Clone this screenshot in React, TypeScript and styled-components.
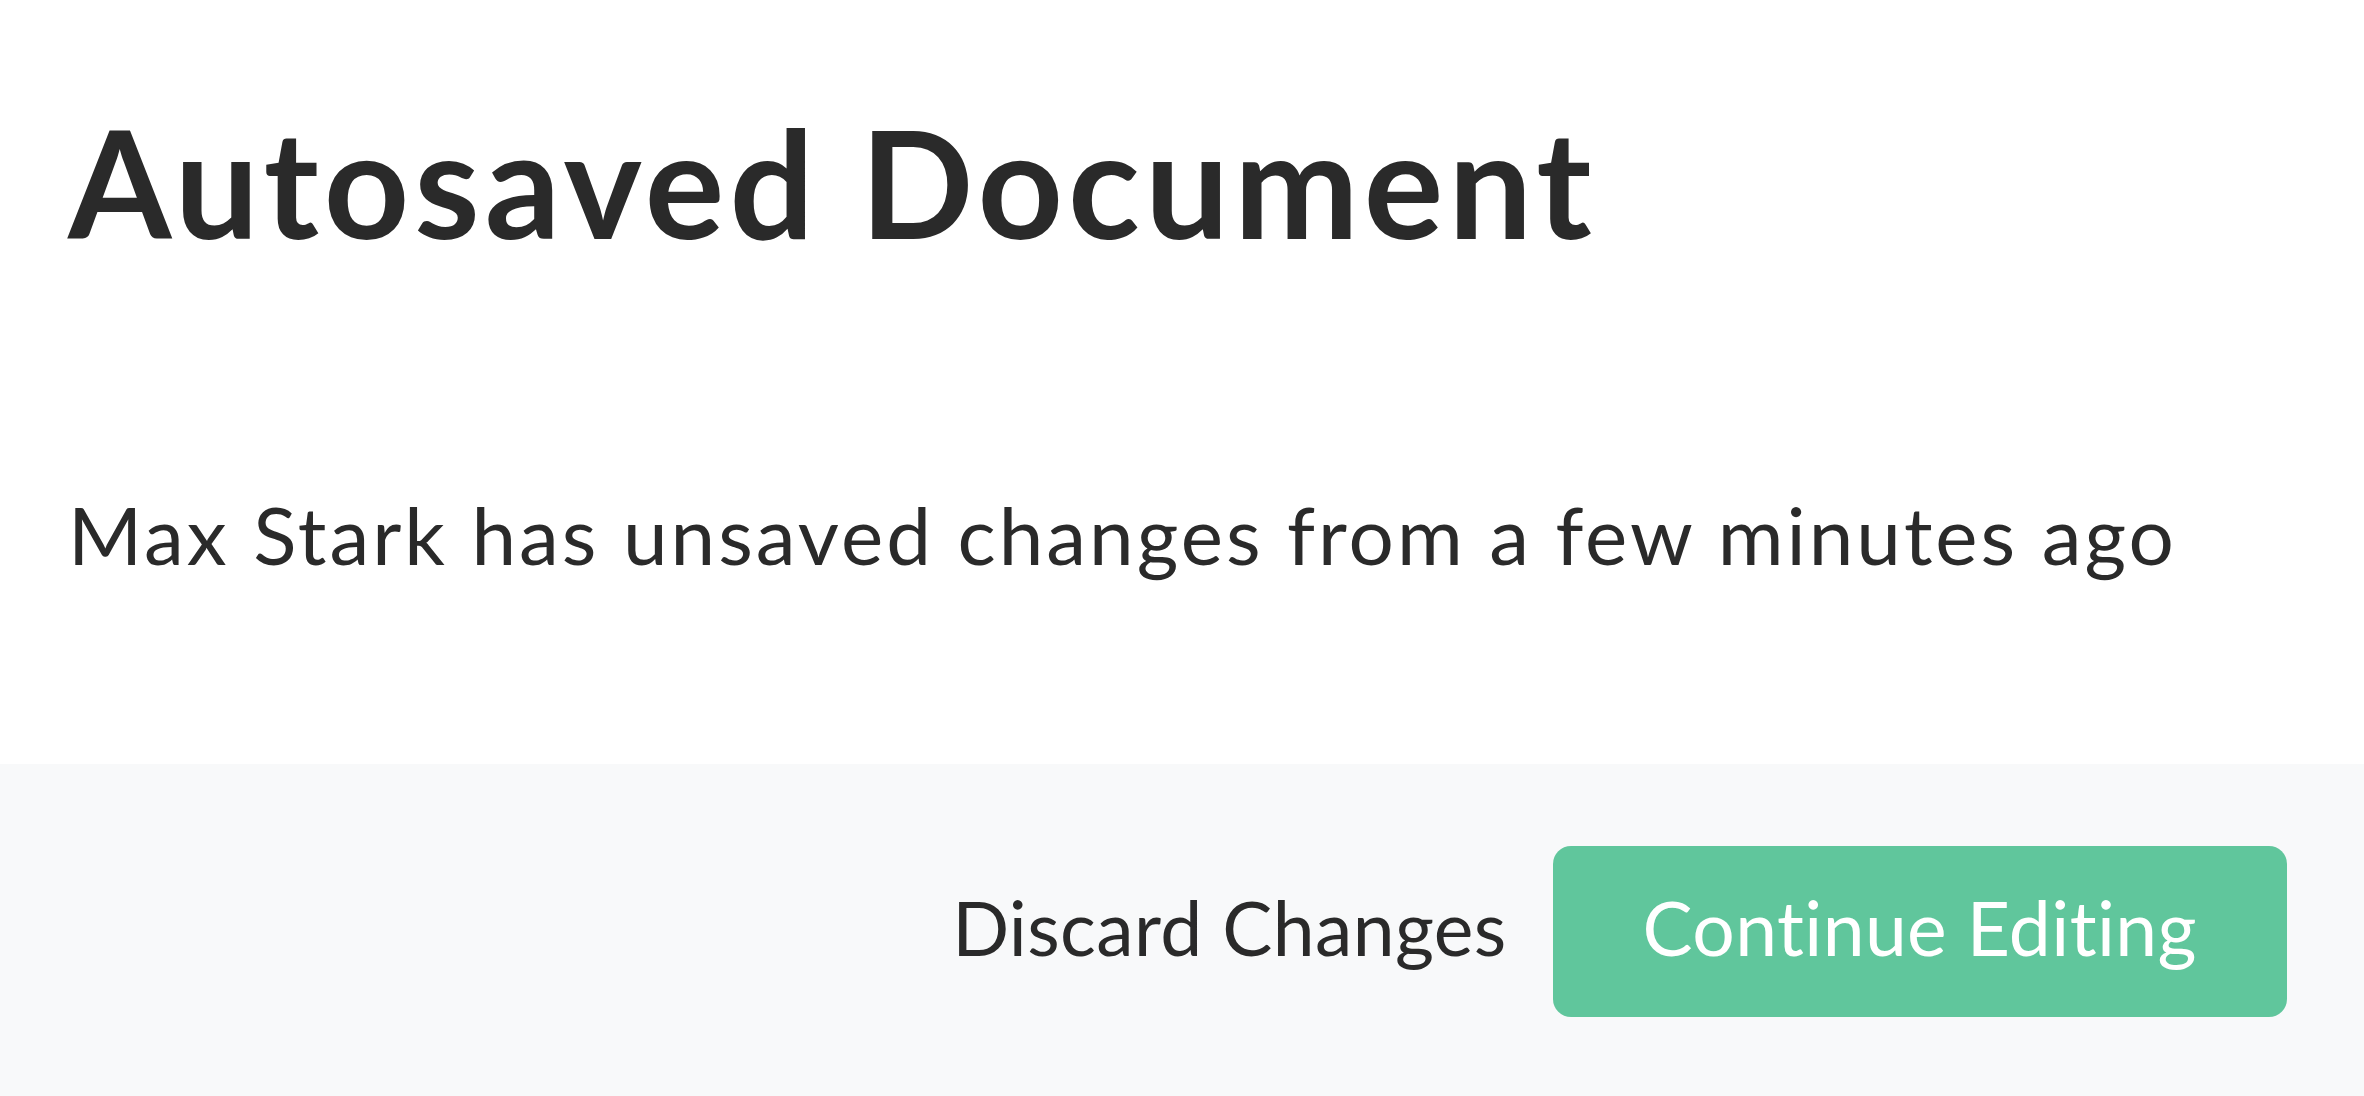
import React from 'react'
import styled, { createGlobalStyle } from 'styled-components'

const GlobalStyle = createGlobalStyle`
  html, body {
    margin: 0;
    padding: 0;
    background: #ffffff;
  }
  body {
    font-family: 'Lato', 'Noto Sans', sans-serif;
    color: #2a2a2a;
  }
`

const Page = styled.div`
  display: flex;
  flex-direction: column;
  width: 2364px;
  height: 1096px;
  overflow: hidden;
`

const Body = styled.section`
  padding: 107px 72px 190px 68px;
  background: #ffffff;
`

const Title = styled.h1`
  margin: 0;
  font-size: 149px;
  line-height: 1;
  font-weight: 700;
  letter-spacing: 5px;
  color: #2a2a2a;
`

const Message = styled.p`
  margin: 238px 0 0;
  font-size: 80px;
  line-height: 1;
  font-weight: 400;
  letter-spacing: 3px;
  color: #2a2a2a;
`

const Footer = styled.footer`
  flex: 1;
  display: flex;
  align-items: center;
  justify-content: flex-end;
  gap: 46px;
  padding: 0 77px 0 72px;
  background: #f8f9fa;
`

const Button = styled.button<{ primary?: boolean }>`
  font-family: 'Lato', 'Noto Sans', sans-serif;
  font-size: 75px;
  font-weight: 400;
  letter-spacing: 0.4px;
  line-height: 1;
  border: none;
  cursor: pointer;
  height: 171px;
  margin-top: 3px;
  border-radius: 18px;
  padding: ${({ primary }) => (primary ? '0 90px 8px' : '0 0 8px')};
  color: ${({ primary }) => (primary ? '#ffffff' : '#2a2a2a')};
  background: ${({ primary }) => (primary ? '#60c69c' : 'transparent')};
`

export default function App() {
  return (
    <Page>
      <GlobalStyle />
      <Body>
        <Title>Autosaved Document</Title>
        <Message>Max Stark has unsaved changes from a few minutes ago</Message>
      </Body>
      <Footer>
        <Button>Discard Changes</Button>
        <Button primary>Continue Editing</Button>
      </Footer>
    </Page>
  )
}
